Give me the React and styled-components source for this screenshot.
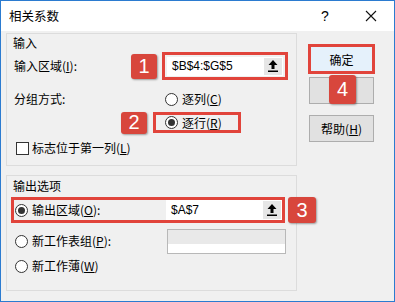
import React from 'react';
import styled, { createGlobalStyle } from 'styled-components';

const GlobalStyle = createGlobalStyle`
  html, body { margin: 0; padding: 0; background: #f0f0f0; }
  body { font-family: "Noto Sans CJK SC", sans-serif; }
`;

const Window = styled.div`
  position: relative;
  width: 395px;
  height: 302px;
  box-sizing: border-box;
  border: 1px solid #2b7bd0;
  background: #f0f0f0;
  display: flex;
  flex-direction: column;
  font-family: "Noto Sans CJK SC", sans-serif;
  font-size: 12px;
  color: #000;
`;

const TitleBar = styled.div`
  height: 30px;
  background: #fff;
  display: flex;
  align-items: center;
  padding-left: 8px;
  font-size: 12.5px;
`;

const Title = styled.div`
  flex: 1;
  line-height: 16px;
`;

const TitleBtn = styled.div`
  width: ${p => p.$w}px;
  height: 30px;
  display: flex;
  align-items: center;
  justify-content: center;
  font-family: "Liberation Sans", sans-serif;
  font-size: 14px;
`;

const Body = styled.div`
  display: flex;
  padding: 2px 0 0 5px;
`;

const LeftCol = styled.div`
  width: 291px;
  display: flex;
  flex-direction: column;
  gap: 9px;
`;

const Group = styled.div`
  height: ${p => p.$h}px;
  box-sizing: border-box;
  border: 1px solid #dcdcdc;
  display: flex;
  flex-direction: column;
`;

const Legend = styled.div`
  height: ${p => p.$h}px;
  padding: ${p => p.$pt}px 0 0 6px;
  box-sizing: border-box;
  line-height: 16px;
`;

const Row = styled.div`
  display: flex;
  align-items: center;
  height: ${p => p.$h}px;
  margin-top: ${p => p.$mt || 0}px;
  padding-left: ${p => p.$pl || 0}px;
`;

const Label = styled.div`
  width: ${p => p.$w}px;
  flex: none;
  line-height: 16px;
  white-space: nowrap;
`;

const Badge = styled.div`
  flex: none;
  width: ${p => p.$w}px;
  height: ${p => p.$h}px;
  background: #d8463c;
  border-radius: 3px;
  box-shadow: 1px 1px 2px rgba(0, 0, 0, 0.35);
  color: #fff;
  font-family: "Liberation Sans", sans-serif;
  font-size: 20px;
  display: flex;
  align-items: center;
  justify-content: center;
  margin-left: ${p => p.$ml || 0}px;
  position: relative;
  z-index: 2;
`;

const FloatBadge = styled(Badge)`
  position: absolute;
  left: ${p => p.$x}px;
  top: ${p => p.$y}px;
`;

const Mark = styled.div`
  flex: none;
  display: flex;
  align-items: center;
  box-sizing: border-box;
  width: ${p => p.$w}px;
  height: ${p => p.$h}px;
  border: 3px solid #e1443b;
  padding: ${p => p.$pad || '0'};
  margin-left: ${p => p.$ml || 0}px;
`;

const Field = styled.div`
  flex: none;
  display: flex;
  box-sizing: border-box;
  width: ${p => p.$w}px;
  height: ${p => p.$h}px;
  border: 1px solid ${p => (p.$disabled ? '#b8b8b8' : '#fff')};
  background: ${p => (p.$disabled ? 'linear-gradient(#e9e9e9 0 60%, #fff 60%)' : '#fff')};
  margin-left: auto;
`;

const FieldText = styled.div`
  flex: 1;
  padding-left: 4px;
  font-family: "Liberation Sans", sans-serif;
  font-size: 12px;
  line-height: ${p => p.$lh}px;
`;

const PickBtn = styled.div`
  width: 18px;
  background: #e6e6e6;
  display: flex;
  align-items: center;
  justify-content: center;
`;

const Radio = styled.span`
  flex: none;
  width: 13px;
  height: 13px;
  box-sizing: border-box;
  border: 1px solid #333;
  border-radius: 50%;
  background: #fff;
  display: flex;
  align-items: center;
  justify-content: center;
  margin-right: 4px;
  &::after {
    content: '';
    width: 7px;
    height: 7px;
    border-radius: 50%;
    background: ${p => (p.$on ? '#333' : 'transparent')};
  }
`;

const Check = styled.span`
  flex: none;
  width: 13px;
  height: 13px;
  box-sizing: border-box;
  border: 1px solid #333;
  background: #fff;
  margin-right: 3px;
`;

const Text = styled.span`
  line-height: 16px;
  white-space: nowrap;
`;

const RightCol = styled.div`
  display: flex;
  flex-direction: column;
  padding: 11px 0 0 11px;
`;

const DefaultWrap = styled.div`
  width: 67px;
  height: 30px;
  box-sizing: border-box;
  border: 3px solid #e1443b;
  background: #e5f1fb;
  display: flex;
  align-items: center;
  justify-content: center;
`;

const Button = styled.div`
  position: relative;
  width: 65px;
  height: 27px;
  margin: ${p => p.$mt}px 0 0 1px;
  box-sizing: border-box;
  border: 1px solid #adadad;
  background: #e1e1e1;
  display: flex;
  align-items: center;
  justify-content: center;
`;

const UpArrow = () => (
  <svg width="10" height="12" viewBox="0 0 10 12">
    <path d="M5 0 L9.5 5 L6.5 5 L6.5 9 L3.5 9 L3.5 5 L0.5 5 Z" fill="#000" />
    <rect x="0" y="10.5" width="10" height="1.5" fill="#000" />
  </svg>
);

const Close = () => (
  <svg width="12" height="12" viewBox="0 0 12 12">
    <path d="M1 1 L11 11 M11 1 L1 11" stroke="#111" strokeWidth="1.1" />
  </svg>
);

export default function App() {
  return (
    <>
      <GlobalStyle />
      <Window>
        <TitleBar>
          <Title>相关系数</Title>
          <TitleBtn $w={46}>?</TitleBtn>
          <TitleBtn $w={46}><Close /></TitleBtn>
        </TitleBar>
        <Body>
          <LeftCol>
            <Group $h={133}>
              <Legend $h={18} $pt={1}>输入</Legend>
              <Row $h={28} $pl={7}>
                <Label $w={117}>输入区域(<u>I</u>):</Label>
                <Badge $w={26} $h={25}>1</Badge>
                <Mark $w={126} $h={28} $pad="2px" $ml={5}>
                  <Field $w={116} $h={19}>
                    <FieldText $lh={17}>$B$4:$G$5</FieldText>
                    <PickBtn><UpArrow /></PickBtn>
                  </Field>
                </Mark>
              </Row>
              <Row $h={20} $mt={9} $pl={7}>
                <Label $w={151}>分组方式:</Label>
                <Radio />
                <Text>逐列(<u>C</u>)</Text>
              </Row>
              <Row $h={21} $mt={3} $pl={114}>
                <Badge $w={26} $h={22}>2</Badge>
                <Mark $w={88} $h={21} $pad="0 0 0 9px" $ml={6}>
                  <Radio $on />
                  <Text>逐行(<u>R</u>)</Text>
                </Mark>
              </Row>
              <Row $h={18} $mt={6} $pl={9}>
                <Check />
                <Text>标志位于第一列(<u>L</u>)</Text>
              </Row>
            </Group>
            <Group $h={116}>
              <Legend $h={19} $pt={2}>输出选项</Legend>
              <Row $h={26} $mt={2} $pl={4}>
                <Mark $w={274} $h={26} $pad="0 0 0 1px">
                  <Radio $on />
                  <Text>输出区域(<u>O</u>):</Text>
                  <Field $w={116} $h={20}>
                    <FieldText $lh={18}>$A$7</FieldText>
                    <PickBtn><UpArrow /></PickBtn>
                  </Field>
                </Mark>
                <Badge $w={28} $h={26} $ml={3}>3</Badge>
              </Row>
              <Row $h={26} $mt={5} $pl={8}>
                <Radio />
                <Text>新工作表组(<u>P</u>):</Text>
                <Field $w={119} $h={25} $disabled style={{ marginRight: 10 }} />
              </Row>
              <Row $h={18} $mt={3} $pl={8}>
                <Radio />
                <Text>新工作薄(<u>W</u>)</Text>
              </Row>
            </Group>
          </LeftCol>
          <RightCol>
            <DefaultWrap>确定</DefaultWrap>
            <Button $mt={3}>
              <FloatBadge $w={27} $h={29} $x={19} $y={-3}>4</FloatBadge>
            </Button>
            <Button $mt={11}>帮助(<u>H</u>)</Button>
          </RightCol>
        </Body>
      </Window>
    </>
  );
}
